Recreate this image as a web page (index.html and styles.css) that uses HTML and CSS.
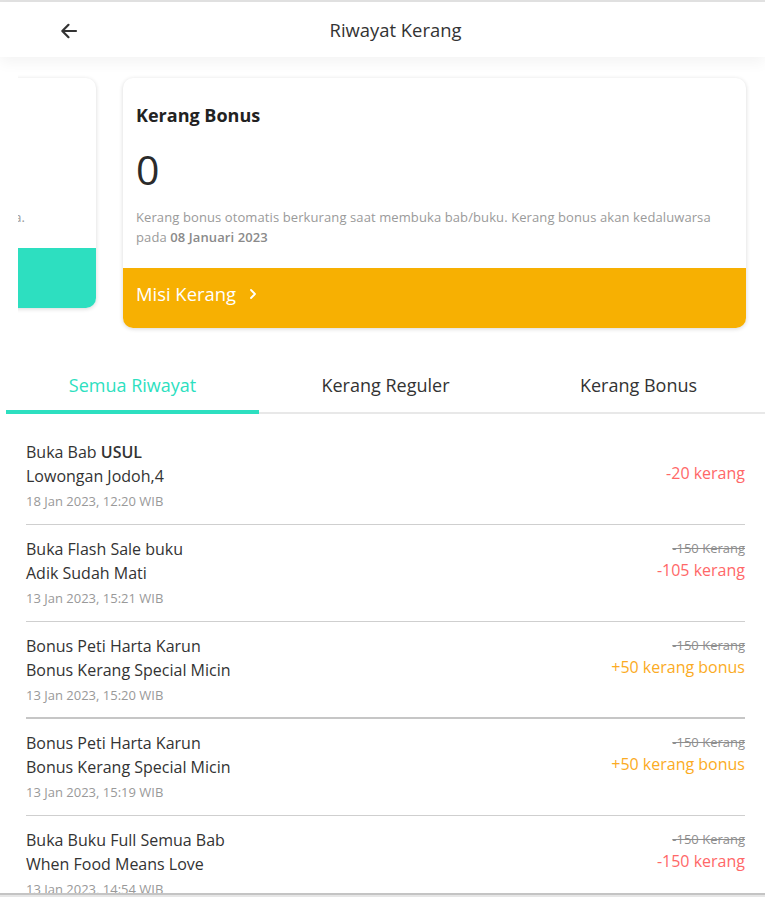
FILE: index.html
```html
<!DOCTYPE html>
<html lang="id">
<head>
<meta charset="utf-8">
<title>Riwayat Kerang</title>
<link rel="stylesheet" href="styles.css">
</head>
<body>
<div class="page">
  <header class="topbar">
    <button class="back" aria-label="Kembali">
      <svg width="20" height="20" viewBox="0 0 20 20"><path d="M17 10H3.5M9.5 3.8L3.3 10l6.2 6.2" fill="none" stroke="#333" stroke-width="2.2" stroke-linecap="round" stroke-linejoin="round"/></svg>
    </button>
    <h1 class="title">Riwayat Kerang</h1>
  </header>

  <section class="carousel">
    <div class="track">
      <article class="card card-regular">
        <div class="card-body">
          <h2 class="card-title">Kerang Reguler</h2>
          <div class="card-value">0</div>
          <p class="card-desc card-desc-clip">Kerang reguler bisa dipakai untuk membuka bab dan buku berbayar kapan saja.</p>
        </div>
        <div class="card-foot foot-teal">Isi Ulang</div>
      </article>
      <article class="card card-bonus">
        <div class="card-body">
          <h2 class="card-title">Kerang Bonus</h2>
          <div class="card-value">0</div>
          <p class="card-desc">Kerang bonus otomatis berkurang saat membuka bab/buku. Kerang bonus akan kedaluwarsa pada <b>08 Januari 2023</b></p>
        </div>
        <a class="card-foot foot-yellow" href="#">Misi Kerang
          <svg class="chev" width="10" height="12" viewBox="0 0 10 12"><path d="M3 2l4 4-4 4" fill="none" stroke="#fff" stroke-width="1.8" stroke-linecap="round" stroke-linejoin="round"/></svg>
        </a>
      </article>
    </div>
  </section>

  <nav class="tabs">
    <div class="tab active">Semua Riwayat</div>
    <div class="tab">Kerang Reguler</div>
    <div class="tab">Kerang Bonus</div>
  </nav>

  <main class="list">
    <div class="item">
      <div class="info">
        <div class="line">Buka Bab <b>USUL</b></div>
        <div class="line">Lowongan Jodoh,4</div>
        <div class="date">18 Jan 2023, 12:20 WIB</div>
      </div>
      <div class="amount">
        <div class="old"></div>
        <div class="val red">-20 kerang</div>
      </div>
    </div>
    <div class="item">
      <div class="info">
        <div class="line">Buka Flash Sale buku</div>
        <div class="line">Adik Sudah Mati</div>
        <div class="date">13 Jan 2023, 15:21 WIB</div>
      </div>
      <div class="amount">
        <div class="old">-150 Kerang</div>
        <div class="val red">-105 kerang</div>
      </div>
    </div>
    <div class="item thick">
      <div class="info">
        <div class="line">Bonus Peti Harta Karun</div>
        <div class="line">Bonus Kerang Special Micin</div>
        <div class="date">13 Jan 2023, 15:20 WIB</div>
      </div>
      <div class="amount">
        <div class="old">-150 Kerang</div>
        <div class="val orange">+50 kerang bonus</div>
      </div>
    </div>
    <div class="item">
      <div class="info">
        <div class="line">Bonus Peti Harta Karun</div>
        <div class="line">Bonus Kerang Special Micin</div>
        <div class="date">13 Jan 2023, 15:19 WIB</div>
      </div>
      <div class="amount">
        <div class="old">-150 Kerang</div>
        <div class="val orange">+50 kerang bonus</div>
      </div>
    </div>
    <div class="item">
      <div class="info">
        <div class="line">Buka Buku Full Semua Bab</div>
        <div class="line">When Food Means Love</div>
        <div class="date">13 Jan 2023, 14:54 WIB</div>
      </div>
      <div class="amount">
        <div class="old">-150 Kerang</div>
        <div class="val red">-150 kerang</div>
      </div>
    </div>
  </main>
  <div class="bottom-edge"></div>
</div>
</body>
</html>
```

FILE: styles.css
```css
* { box-sizing: border-box; }
html, body { margin: 0; padding: 0; }
body {
  background: #fff;
  font-family: "Open Sans", "Noto Sans", sans-serif;
  color: #333;
  overflow: hidden;
}
.page {
  height: 897px;
  display: flex;
  flex-direction: column;
  border-top: 2px solid #e2e2e2;
}
.topbar {
  position: relative;
  z-index: 2;
  height: 55px;
  background: #fff;
  display: flex;
  align-items: center;
  justify-content: center;
  box-shadow: 0 5px 14px rgba(0,0,0,0.05);
}
.back {
  position: absolute;
  left: 58px;
  top: 18px;
  width: 22px;
  height: 22px;
  padding: 0;
  border: 0;
  background: none;
  display: flex;
  align-items: center;
  justify-content: center;
}
.title {
  margin: 0;
  font-size: 18.4px;
  font-weight: 400;
  color: #333;
  line-height: 24px;
  padding-left: 26px;
}
.carousel {
  margin-left: 18px;
  overflow: hidden;
  padding: 21px 0 12px;
}
.track {
  display: flex;
  gap: 27px;
  padding-bottom: 8px;
}
.card {
  flex: 0 0 623px;
  background: #fff;
  border-radius: 10px;
  box-shadow: 0 1px 4px rgba(0,0,0,0.16);
  overflow: hidden;
  display: flex;
  flex-direction: column;
  height: 250px;
}
.card-regular {
  margin-left: -545px;
  height: 230px;
}
.card-body {
  padding: 25px 13px 0;
  flex: 1;
}
.card-title {
  margin: 0;
  font-size: 18px;
  font-weight: 700;
  line-height: 24px;
  color: #222;
}
.card-value {
  font-size: 41px;
  font-weight: 500;
  line-height: 50px;
  margin-top: 17px;
  color: #2b2b2b;
}
.card-desc {
  margin: 13px 0 0;
  font-size: 13px;
  line-height: 20px;
  color: #9a9a9a;
  letter-spacing: 0.1px;
}
.card-desc b { font-weight: 600; color: #8a8a8a; }
.card-desc-clip {
  white-space: nowrap;
  text-align: right;
  padding-right: 58px;
}
.card-foot {
  height: 60px;
  flex: 0 0 60px;
  display: flex;
  align-items: center;
  padding: 0 0 9px 13px;
  font-size: 18.4px;
  color: #fff;
  text-decoration: none;
}
.foot-teal { background: #2ddfc0; color: transparent; }
.foot-yellow { background: #f7b002; }
.chev { margin-left: 12px; }

.tabs {
  margin-left: 6px;
  margin-top: 14px;
  display: grid;
  grid-template-columns: repeat(3, 253px);
  border-bottom: 2px solid #e8e8e8;
}
.tab {
  text-align: center;
  font-size: 18px;
  line-height: 24px;
  padding: 11px 0 13px;
  color: #333;
  border-bottom: 4px solid transparent;
  margin-bottom: -2px;
}
.tab.active {
  color: #2ddfc0;
  border-bottom-color: #2ddfc0;
}

.list {
  flex: 1;
  overflow: hidden;
  padding: 14px 20px 0 26px;
}
.item {
  display: flex;
  justify-content: space-between;
  padding: 12px 0 13px;
  border-bottom: 1px solid #cfcfcf;
}
.item.thick { border-bottom: 2px solid #c6c6c6; padding-bottom: 12px; }
.line {
  font-size: 16px;
  line-height: 24px;
  color: #333;
}
.line b { font-weight: 600; }
.date {
  margin-top: 3px;
  font-size: 13px;
  line-height: 20px;
  color: #999;
}
.amount { text-align: right; }
.old {
  height: 22px;
  font-size: 13px;
  line-height: 22px;
  color: #8e8e8e;
  text-decoration: line-through;
}
.val {
  font-size: 16px;
  line-height: 22px;
}
.red { color: #ff6868; }
.orange { color: #fbab24; }
.bottom-edge {
  height: 4px;
  flex: 0 0 4px;
  background: #e6e6e6;
  border-top: 2px solid #c4c4c4;
}
```
